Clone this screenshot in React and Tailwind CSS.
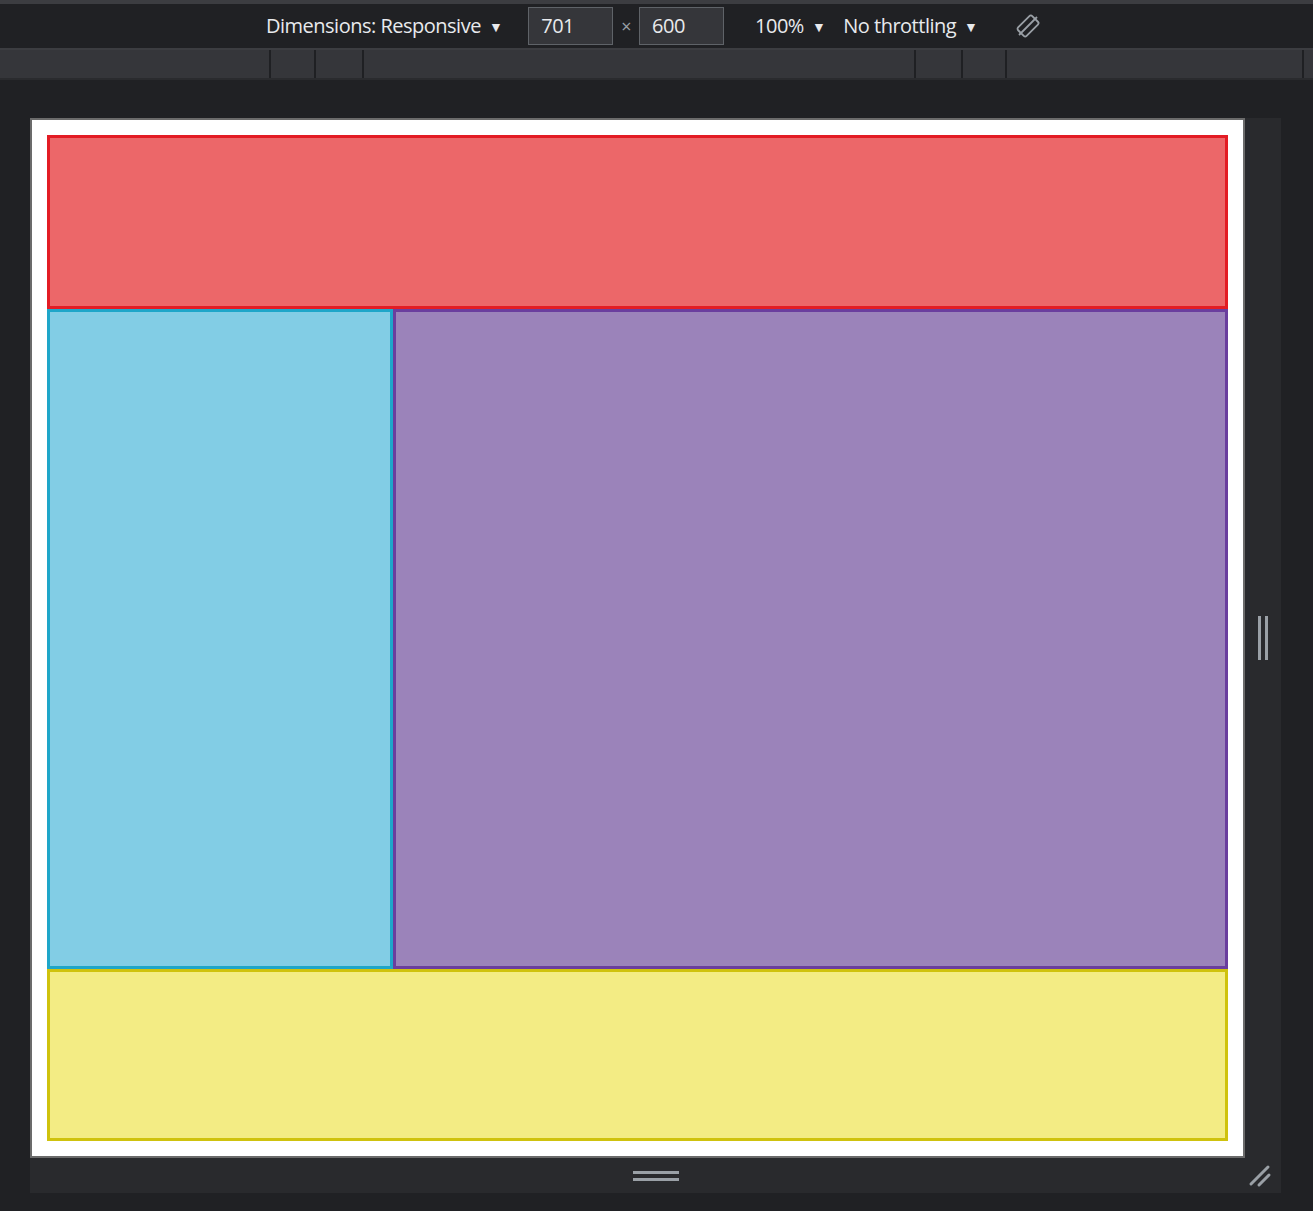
export default function App() {
  const seg = "h-full border-r-2 border-[#1f2023]";
  return (
    <div className="w-[1313px] h-[1211px] bg-[#202124] flex flex-col" style={{ fontFamily: '"Open Sans", "Liberation Sans", sans-serif' }}>
      <div className="h-[4px] bg-[#3c3d41]" />
      <div className="h-[46px] flex items-center text-[#e8eaed] text-[20px] tracking-tight border-b-2 border-[#3c3d41]">
        <div className="w-[266px]" />
        <span>Dimensions: Responsive</span>
        <span className="ml-[8px] text-[14px]">▼</span>
        <div className="ml-[26px] w-[85px] h-[38px] bg-[#35363a] border border-[#5f6368] flex items-center pl-[12px]">701</div>
        <span className="mx-[8px] text-[#9aa0a6] text-[18px]">×</span>
        <div className="w-[85px] h-[38px] bg-[#35363a] border border-[#5f6368] flex items-center pl-[12px]">600</div>
        <span className="ml-[31px]">100%</span>
        <span className="ml-[8px] text-[14px]">▼</span>
        <span className="ml-[18px]">No throttling</span>
        <span className="ml-[8px] text-[14px]">▼</span>
        <svg className="ml-[38px]" width="26" height="26" viewBox="0 0 26 26" fill="none" stroke="#9aa0a6" strokeWidth="1.8">
          <rect x="7" y="3" width="12" height="20" rx="2" transform="rotate(45 13 13)" />
          <line x1="4" y1="22" x2="22" y2="4" />
        </svg>
      </div>
      <div className="h-[30px] flex bg-[#35363a] border-b-2 border-[#2a2b2e]">
        <div className={seg + " w-[271px]"} />
        <div className={seg + " w-[45px]"} />
        <div className={seg + " w-[48px]"} />
        <div className={seg + " w-[552px]"} />
        <div className={seg + " w-[47px]"} />
        <div className={seg + " w-[44px]"} />
        <div className={seg + " w-[297px]"} />
        <div className="flex-1" />
      </div>
      <div className="h-[38px]" />
      <div className="ml-[30px] w-[1251px] flex flex-col">
        <div className="flex">
          <div className="w-[1215px] h-[1040px] bg-white border-2 border-[#6b6b6b] p-[15px] flex flex-col">
            <div className="h-[174px] bg-[#ec6769] border-[3px] border-[#e31c24]" />
            <div className="flex flex-1">
              <div className="w-[346px] bg-[#82cde5] border-[3px] border-[#1ea6c9]" />
              <div className="flex-1 bg-[#9b83ba] border-[3px] border-[#6a3e9e]" />
            </div>
            <div className="h-[172px] bg-[#f3ec84] border-[3px] border-[#cfc20d]" />
          </div>
          <div className="w-[36px] bg-[#292a2d] flex items-center justify-center">
            <div className="flex gap-[4px]">
              <div className="w-[3px] h-[44px] bg-[#9aa0a6]" />
              <div className="w-[3px] h-[44px] bg-[#9aa0a6]" />
            </div>
          </div>
        </div>
        <div className="h-[35px] bg-[#292a2d] flex items-center justify-center relative">
          <div className="flex flex-col gap-[4px]">
            <div className="w-[46px] h-[3px] bg-[#9aa0a6]" />
            <div className="w-[46px] h-[3px] bg-[#9aa0a6]" />
          </div>
          <svg className="absolute right-[8px] bottom-[4px]" width="26" height="26" viewBox="0 0 26 26" stroke="#9aa0a6" strokeWidth="3" strokeLinecap="round">
            <line x1="4" y1="21" x2="21" y2="4" />
            <line x1="12" y1="22" x2="22" y2="12" />
          </svg>
        </div>
      </div>
    </div>
  );
}
